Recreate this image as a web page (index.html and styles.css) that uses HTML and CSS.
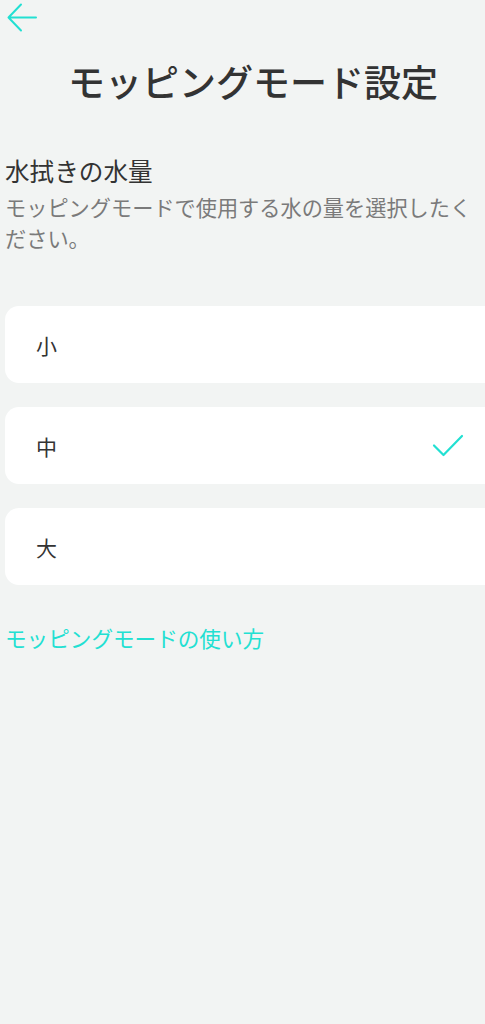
FILE: index.html
```html
<!DOCTYPE html>
<html lang="ja">
<head>
<meta charset="utf-8">
<title>モッピングモード設定</title>
<link rel="stylesheet" href="styles.css">
</head>
<body>
<div class="screen">
  <header class="topbar">
    <svg class="back" width="32" height="32" viewBox="0 0 32 32" aria-label="戻る">
      <path d="M30 14.5H3M15 1.5L2.5 14.5L15 27.5" fill="none" stroke="#22e0d2" stroke-width="2" stroke-linecap="round" stroke-linejoin="round"/>
    </svg>
  </header>
  <h1 class="title">モッピングモード設定</h1>
  <section class="intro">
    <h2 class="heading">水拭きの水量</h2>
    <p class="desc">モッピングモードで使用する水の量を選択したください。</p>
  </section>
  <ul class="options">
    <li class="option">小</li>
    <li class="option selected">中
      <svg class="check" width="32" height="24" viewBox="0 0 32 24">
        <path d="M2 11.5L11.5 21L30 2" fill="none" stroke="#22e0d2" stroke-width="2.2" stroke-linecap="round" stroke-linejoin="round"/>
      </svg>
    </li>
    <li class="option">大</li>
  </ul>
  <a class="howto" href="#">モッピングモードの使い方</a>
</div>
</body>
</html>
```
FILE: styles.css
```css
html, body {
  margin: 0;
  padding: 0;
  overflow: hidden;
  background: #f2f4f3;
}
.screen {
  width: 506px;
  min-height: 1024px;
  font-family: "Noto Sans CJK JP", "Noto Sans", sans-serif;
  color: #333;
  display: flex;
  flex-direction: column;
}
.topbar {
  height: 40px;
  padding: 3px 0 0 6px;
  box-sizing: border-box;
}
.back { display: block; }
.title {
  margin: 16px 0 0;
  font-size: 37px;
  line-height: 50px;
  font-weight: 500;
  text-align: center;
  color: #333;
}
.intro {
  padding: 0 0 0 5px;
  margin-top: 47px;
}
.heading {
  margin: 0;
  font-size: 24.6px;
  line-height: 34px;
  font-weight: 400;
  color: #333;
}
.desc {
  margin: 4px 0 0;
  width: 480px;
  font-size: 21.2px;
  line-height: 31px;
  color: #7a7a7a;
}
.options {
  list-style: none;
  margin: 53px 0 0;
  padding: 0 5px;
  display: flex;
  flex-direction: column;
  gap: 24px;
}
.option {
  height: 77px;
  background: #fff;
  border-radius: 14px;
  display: flex;
  align-items: center;
  justify-content: space-between;
  padding: 0 37px 0 31px;
  font-size: 21px;
  color: #333;
}
.check { display: block; margin-top: 1px; }
.howto {
  margin: 38px 0 0 5px;
  font-size: 21.6px;
  line-height: 30px;
  color: #22e0d2;
  text-decoration: none;
  align-self: flex-start;
}
```
